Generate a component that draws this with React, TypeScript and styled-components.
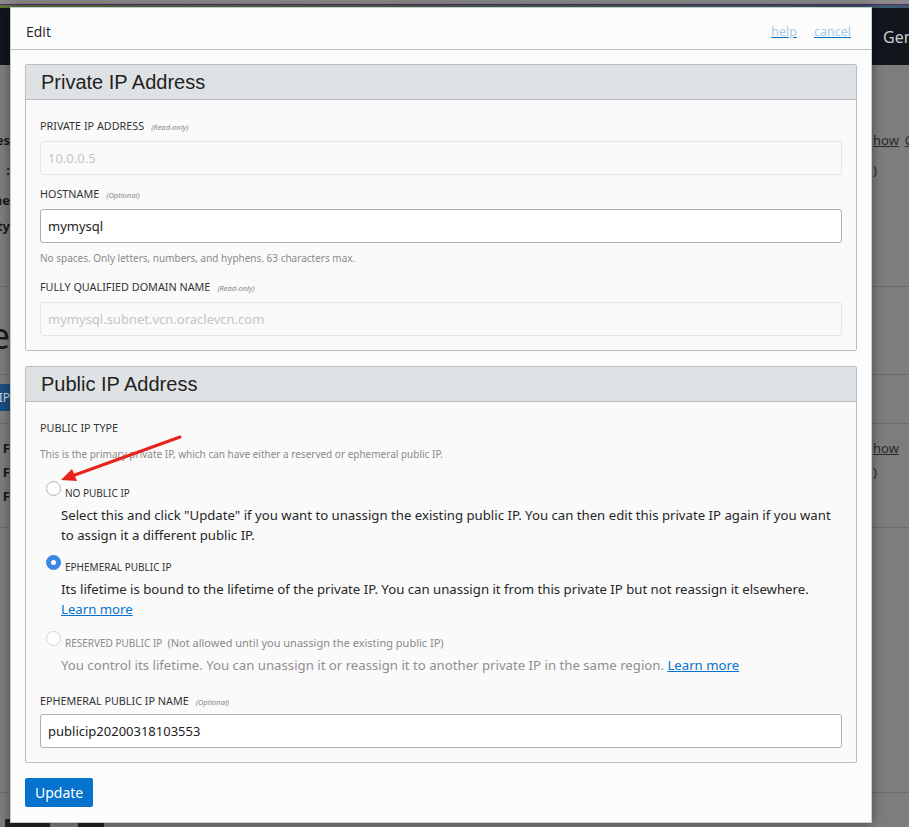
import * as React from 'react';
import styled, { createGlobalStyle, css } from 'styled-components';

const GlobalStyle = createGlobalStyle`
    html, body {
        margin: 0;
        padding: 0;
    }
    body {
        font-family: "Noto Sans", "Open Sans", Arial, sans-serif;
        background: #7d7d7d;
        overflow: hidden;
    }
`;

const Page = styled.div`
    position: relative;
    width: 909px;
    height: 827px;
    overflow: hidden;
    background: #7d7d7d;
`;

const TopStrip = styled.div`
    height: 4px;
    background: #8a8a8a;
    border-bottom: 1px solid #5a2a6a;
`;

const GradientBar = styled.div`
    height: 3px;
    background: linear-gradient(90deg, #5b7a3c, #4a6a58 60%, #3a5a70);
`;

const BgHeader = styled.div`
    height: 57px;
    background: #11161d;
    display: flex;
    align-items: center;
    justify-content: flex-end;
    color: #c9ccd0;
    font-size: 16px;
    overflow: hidden;
`;

const BgHeaderText = styled.span`
    width: 26px;
    white-space: nowrap;
`;

const BgSection = styled.div<{ $height: number; $padTop?: number }>`
    height: ${(p) => p.$height}px;
    box-sizing: border-box;
    padding-top: ${(p) => p.$padTop ?? 0}px;
    border-bottom: 1px solid #6b6b6b;
    display: flex;
    flex-direction: column;
`;

const BgLine = styled.div<{ $height: number }>`
    height: ${(p) => p.$height}px;
    display: flex;
    align-items: center;
    justify-content: space-between;
`;

const BgLeft = styled.div<{ $big?: boolean }>`
    width: 10px;
    overflow: hidden;
    display: flex;
    justify-content: flex-end;
    white-space: nowrap;
    color: #1a1a1a;
    font-size: ${(p) => (p.$big ? '36px' : '13px')};
    font-weight: ${(p) => (p.$big ? 400 : 700)};
`;

const BgRight = styled.div`
    width: 36px;
    white-space: nowrap;
    overflow: hidden;
    color: #2a2a2a;
    font-size: 13px;
`;

const BgLink = styled.span`
    text-decoration: underline;
    margin-right: 6px;
`;

const BgTab = styled.div`
    width: 10px;
    height: 27px;
    margin-top: 9px;
    background: #1b4e80;
    color: #cfd8e2;
    font-size: 12px;
    display: flex;
    align-items: center;
    justify-content: flex-end;
    overflow: hidden;
`;

const BgThumbRow = styled.div`
    display: flex;
    gap: 28px;
    padding: 26px 0 0 5px;
`;

const BgThumb = styled.div<{ $width: number }>`
    width: ${(p) => p.$width}px;
    height: 8px;
    background: #1e2228;
`;

const Modal = styled.div`
    position: absolute;
    left: 10px;
    top: 7px;
    width: 862px;
    height: 816px;
    box-sizing: border-box;
    background: #fcfcfc;
    border: 1px solid #c6cbd0;
    box-shadow: 0 0 10px rgba(0, 0, 0, 0.45);
    display: flex;
    flex-direction: column;
`;

const ModalHeader = styled.div`
    height: 42px;
    box-sizing: border-box;
    border-bottom: 1px solid #b8bdc3;
    display: flex;
    align-items: center;
    padding: 5px 20px 0 15px;
`;

const ModalTitle = styled.div`
    flex: 1;
    font-family: "Open Sans", "Noto Sans", sans-serif;
    font-size: 14px;
    color: #222;
`;

const HeaderLink = styled.a`
    font-size: 12.5px;
    color: #a9c9ea;
    text-decoration: underline;
    text-decoration-color: #0572ce;
    margin-left: 17px;
    cursor: pointer;
`;

const ModalBody = styled.div`
    padding: 14px 14px 0 14px;
    display: flex;
    flex-direction: column;
    gap: 15px;
`;

const Panel = styled.section`
    border: 1px solid #b9bec4;
    border-radius: 2px;
    background: #fafafa;
`;

const PanelHeader = styled.h2`
    margin: 0;
    height: 35px;
    box-sizing: border-box;
    border-bottom: 1px solid #b9bec4;
    background: #dfe2e5;
    padding: 0 15px;
    display: flex;
    align-items: center;
    font-family: "Liberation Sans", Arial, sans-serif;
    font-weight: 400;
    font-size: 20px;
    color: #222;
`;

const PanelBody = styled.div`
    padding: 19px 14px 14px 14px;
    display: flex;
    flex-direction: column;
`;

const FieldLabel = styled.div<{ $gap?: number }>`
    margin-top: ${(p) => p.$gap ?? 0}px;
    height: 14px;
    line-height: 14px;
    font-size: 10.8px;
    color: #333;
    text-transform: uppercase;
    white-space: nowrap;
`;

const LabelNote = styled.span`
    margin-left: 7px;
    text-transform: none;
    font-style: italic;
    font-size: 7.5px;
    color: #888;
`;

const TextInput = styled.input<{ $disabled?: boolean; $gap?: number }>`
    display: block;
    width: 100%;
    height: 34px;
    margin-top: ${(p) => p.$gap ?? 8}px;
    box-sizing: border-box;
    padding: 0 7px;
    font-family: "Noto Sans", sans-serif;
    font-size: 13px;
    border-radius: 3px;
    outline: none;
    ${(p) =>
        p.$disabled
            ? css`
                  background: #fafafa;
                  border: 1px solid #e6e6e6;
                  color: #c4c4c4;
              `
            : css`
                  background: #fff;
                  border: 1px solid #a9b0b7;
                  color: #222;
              `}
`;

const HelpText = styled.div<{ $gap: number }>`
    margin-top: ${(p) => p.$gap}px;
    height: 14px;
    line-height: 14px;
    font-size: 10px;
    color: #8a8a8a;
    white-space: nowrap;
`;

const Option = styled.div<{ $gap: number }>`
    margin-top: ${(p) => p.$gap}px;
    display: flex;
    flex-direction: column;
`;

const OptionRow = styled.label`
    height: 17px;
    display: flex;
    align-items: flex-start;
    padding-left: 6px;
    gap: 4px;
`;

const Radio = styled.span<{ $checked?: boolean; $disabled?: boolean }>`
    width: 15px;
    height: 15px;
    box-sizing: border-box;
    border-radius: 50%;
    flex: none;
    ${(p) =>
        p.$checked
            ? css`
                  background: #fff;
                  border: 5px solid #3b88e4;
              `
            : css`
                  background: #fff;
                  border: 1px solid ${p.$disabled ? '#d8d3ce' : '#b9b1a9'};
              `}
`;

const OptionTitle = styled.span<{ $disabled?: boolean }>`
    margin-top: 5px;
    font-size: 10px;
    line-height: 14px;
    color: ${(p) => (p.$disabled ? '#8a8a8a' : '#333')};
    white-space: nowrap;
`;

const OptionNote = styled.span`
    margin-left: 5px;
    font-size: 11px;
`;

const OptionDesc = styled.div<{ $disabled?: boolean }>`
    padding-left: 21px;
    margin-top: 8px;
    font-size: 13.2px;
    line-height: 19.5px;
    color: ${(p) => (p.$disabled ? '#8f8f8f' : '#262626')};
`;

const LearnMore = styled.a`
    color: #0572ce;
    text-decoration: underline;
    cursor: pointer;
`;

const UpdateButton = styled.button`
    align-self: flex-start;
    height: 29px;
    padding: 0 10px;
    border: none;
    border-radius: 2px;
    background: #0572ce;
    color: #fff;
    font-family: "Noto Sans", sans-serif;
    font-size: 14px;
    cursor: pointer;
`;

const Annotation = styled.svg`
    position: absolute;
    left: 0;
    top: 0;
    pointer-events: none;
`;

function RadioOption({
    gap,
    title,
    note,
    checked,
    disabled,
    children,
}: {
    gap: number;
    title: string;
    note?: string;
    checked?: boolean;
    disabled?: boolean;
    children: React.ReactNode;
}): React.ReactElement {
    return (
        <Option $gap={gap}>
            <OptionRow>
                <Radio $checked={checked} $disabled={disabled} />
                <OptionTitle $disabled={disabled}>
                    {title}
                    {note && <OptionNote>{note}</OptionNote>}
                </OptionTitle>
            </OptionRow>
            <OptionDesc $disabled={disabled}>{children}</OptionDesc>
        </Option>
    );
}

function Backdrop(): React.ReactElement {
    return (
        <>
            <TopStrip />
            <GradientBar />
            <BgHeader>
                <BgHeaderText>Gem</BgHeaderText>
            </BgHeader>
            <BgSection $height={222} $padTop={60}>
                <BgLine $height={30}>
                    <BgLeft>Addresses</BgLeft>
                    <BgRight>
                        <BgLink>how</BgLink>
                        <BgLink>C</BgLink>
                    </BgRight>
                </BgLine>
                <BgLine $height={30}>
                    <BgLeft>:</BgLeft>
                    <BgRight>)</BgRight>
                </BgLine>
                <BgLine $height={30}>
                    <BgLeft>Zone</BgLeft>
                    <BgRight />
                </BgLine>
                <BgLine $height={22}>
                    <BgLeft>Security</BgLeft>
                    <BgRight />
                </BgLine>
            </BgSection>
            <BgSection $height={88} $padTop={26}>
                <BgLine $height={44}>
                    <BgLeft $big>se</BgLeft>
                </BgLine>
            </BgSection>
            <BgSection $height={49}>
                <BgTab>IP</BgTab>
            </BgSection>
            <BgSection $height={104} $padTop={12}>
                <BgLine $height={24}>
                    <BgLeft>F</BgLeft>
                    <BgRight>
                        <BgLink>how</BgLink>
                    </BgRight>
                </BgLine>
                <BgLine $height={24}>
                    <BgLeft>F</BgLeft>
                    <BgRight>)</BgRight>
                </BgLine>
                <BgLine $height={24}>
                    <BgLeft>F</BgLeft>
                    <BgRight />
                </BgLine>
            </BgSection>
            <BgSection $height={265} />
            <BgThumbRow>
                <BgThumb $width={45} />
                <BgThumb $width={26} />
            </BgThumbRow>
        </>
    );
}

export default function App(): React.ReactElement {
    return (
        <Page>
            <GlobalStyle />
            <Backdrop />
            <Modal>
                <ModalHeader>
                    <ModalTitle>Edit</ModalTitle>
                    <HeaderLink>help</HeaderLink>
                    <HeaderLink>cancel</HeaderLink>
                </ModalHeader>
                <ModalBody>
                    <Panel>
                        <PanelHeader>Private IP Address</PanelHeader>
                        <PanelBody>
                            <FieldLabel>
                                Private IP Address
                                <LabelNote>(Read-only)</LabelNote>
                            </FieldLabel>
                            <TextInput $disabled readOnly value="10.0.0.5" />
                            <FieldLabel $gap={12}>
                                Hostname
                                <LabelNote>(Optional)</LabelNote>
                            </FieldLabel>
                            <TextInput readOnly value="mymysql" />
                            <HelpText $gap={8}>
                                No spaces. Only letters, numbers, and hyphens.
                                63 characters max.
                            </HelpText>
                            <FieldLabel $gap={15}>
                                Fully Qualified Domain Name
                                <LabelNote>(Read-only)</LabelNote>
                            </FieldLabel>
                            <TextInput
                                $disabled
                                readOnly
                                value="mymysql.subnet.vcn.oraclevcn.com"
                            />
                        </PanelBody>
                    </Panel>
                    <Panel>
                        <PanelHeader>Public IP Address</PanelHeader>
                        <PanelBody>
                            <FieldLabel>Public IP Type</FieldLabel>
                            <HelpText $gap={12}>
                                This is the primary private IP, which can have
                                either a reserved or ephemeral public IP.
                            </HelpText>
                            <RadioOption gap={20} title="NO PUBLIC IP">
                                Select this and click "Update" if you want to
                                unassign the existing public IP. You can then
                                edit this private IP again if you want to assign
                                it a different public IP.
                            </RadioOption>
                            <RadioOption
                                gap={10}
                                title="EPHEMERAL PUBLIC IP"
                                checked
                            >
                                Its lifetime is bound to the lifetime of the
                                private IP. You can unassign it from this private
                                IP but not reassign it elsewhere.
                                <br />
                                <LearnMore>Learn more</LearnMore>
                            </RadioOption>
                            <RadioOption
                                gap={12}
                                title="RESERVED PUBLIC IP"
                                note="(Not allowed until you unassign the existing public IP)"
                                disabled
                            >
                                You control its lifetime. You can unassign it or
                                reassign it to another private IP in the same
                                region. <LearnMore>Learn more</LearnMore>
                            </RadioOption>
                            <FieldLabel $gap={18}>
                                Ephemeral Public IP Name
                                <LabelNote>(Optional)</LabelNote>
                            </FieldLabel>
                            <TextInput
                                $gap={6}
                                readOnly
                                value="publicip20200318103553"
                            />
                        </PanelBody>
                    </Panel>
                    <UpdateButton>Update</UpdateButton>
                </ModalBody>
            </Modal>
            <Annotation width="909" height="827" viewBox="0 0 909 827">
                <line
                    x1="180"
                    y1="437"
                    x2="72"
                    y2="476"
                    stroke="#e8231c"
                    strokeWidth="3"
                    strokeLinecap="round"
                />
                <polygon points="61,480 72,469 77,481" fill="#e8231c" />
            </Annotation>
        </Page>
    );
}
